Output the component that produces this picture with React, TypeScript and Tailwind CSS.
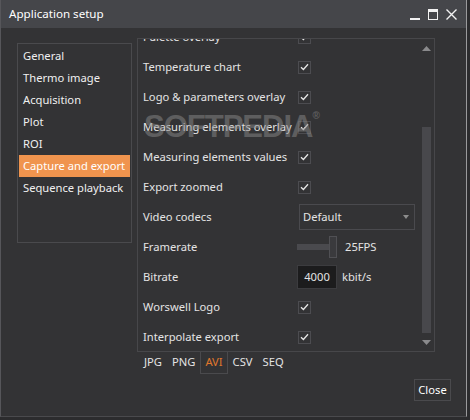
import React from 'react';

const ROWS_TOP = [
  { label: 'Palette overlay', kind: 'check' },
  { label: 'Temperature chart', kind: 'check' },
  { label: 'Logo & parameters overlay', kind: 'check' },
  { label: 'Measuring elements overlay', kind: 'check' },
  { label: 'Measuring elements values', kind: 'check' },
  { label: 'Export zoomed', kind: 'check' },
  { label: 'Video codecs', kind: 'select' },
  { label: 'Framerate', kind: 'slider' },
  { label: 'Bitrate', kind: 'input' },
  { label: 'Worswell Logo', kind: 'check' },
  { label: 'Interpolate export', kind: 'check' },
];

const NAV = ['General', 'Thermo image', 'Acquisition', 'Plot', 'ROI', 'Capture and export', 'Sequence playback'];
const TABS = ['JPG', 'PNG', 'AVI', 'CSV', 'SEQ'];

function Check() {
  return (
    <span className="flex h-[13px] w-[13px] items-center justify-center border border-[#4c4c50]">
      <svg width="9" height="8" viewBox="0 0 9 8" fill="none">
        <path d="M1 4.2 L3.4 6.5 L8 1.2" stroke="#e6e6e6" strokeWidth="1.3" />
      </svg>
    </span>
  );
}

function Control({ kind }: { kind: string }) {
  if (kind === 'check') return <Check />;
  if (kind === 'select') {
    return (
      <div className="ml-[1px] flex h-[26px] w-[116px] items-center justify-between border border-[#4a4a4e] pl-[3px] pr-[5px]">
        <span>Default</span>
        <svg width="6" height="4" viewBox="0 0 6 4">
          <path d="M0 0 H6 L3 4 Z" fill="#8c8c8c" />
        </svg>
      </div>
    );
  }
  if (kind === 'slider') {
    return (
      <div className="ml-[-1px] flex items-center">
        <div className="h-[6px] w-[32px] bg-[#4a4a4e]" />
        <div className="h-[22px] w-[8px] border border-[#505054] bg-[#3a3a3d]" />
        <span className="ml-[8px]">25FPS</span>
      </div>
    );
  }
  return (
    <div className="ml-[-1px] flex items-center">
      <div className="flex h-[24px] w-[40px] items-center justify-center border border-[#3c3c3f] bg-[#1c1c1d]">4000</div>
      <span className="ml-[5px]">kbit/s</span>
    </div>
  );
}

export default function App() {
  return (
    <div className="h-[420px] w-[470px] bg-[#2c2c2e] font-['Noto_Sans',sans-serif] text-[11.2px] text-[#e4e4e4]">
      <div className="flex h-[417px] w-[467px] flex-col border-l border-r border-b border-l-[#56565a] border-r-[#9a9a9c] border-b-[#4a4a4d] bg-[#333335]">
        {/* title bar */}
        <div className="flex h-[28px] shrink-0 items-center justify-between bg-[#45464a] pl-[8px] pr-[9px]">
          <span className="text-[11.6px] text-white">Application setup</span>
          <div className="flex items-center gap-[8px]">
            <svg width="10" height="11" viewBox="0 0 10 11">
              <rect x="0" y="9" width="10" height="2" fill="#f2f2f2" />
            </svg>
            <svg width="10" height="11" viewBox="0 0 10 11">
              <rect x="0.5" y="0.5" width="9" height="10" fill="none" stroke="#f2f2f2" />
              <rect x="0" y="0" width="10" height="3" fill="#f2f2f2" />
            </svg>
            <svg width="11" height="11" viewBox="0 0 11 11">
              <path d="M0.5 0.5 L10.5 10.5 M10.5 0.5 L0.5 10.5" stroke="#f2f2f2" strokeWidth="1.4" />
            </svg>
          </div>
        </div>

        {/* body */}
        <div className="relative flex flex-1 flex-col">
          <div className="flex pt-[10px]">
            <div className="ml-[16px] mt-[5px] flex h-[200px] w-[115px] flex-col border border-[#4a4a4d] p-[1px]">
              {NAV.map((item) => (
                <div
                  key={item}
                  className={
                    item === 'Capture and export'
                      ? 'flex h-[22px] items-center whitespace-nowrap bg-[#f0944e] pl-[4px] text-white'
                      : 'flex h-[22px] items-center whitespace-nowrap pl-[4px] text-[#f0f0f0]'
                  }
                >
                  {item}
                </div>
              ))}
            </div>

            <div className="ml-[5px] flex flex-col">
              <div className="flex h-[314px] w-[298px] border border-[#47474a]">
                <div className="flex-1 overflow-hidden">
                  <div className="-mt-[17px] flex flex-col pl-[5px]">
                    {ROWS_TOP.map((row) => (
                      <div key={row.label} className="flex h-[30px] items-center">
                        <span className="w-[155px] shrink-0 whitespace-nowrap">{row.label}</span>
                        <Control kind={row.kind} />
                      </div>
                    ))}
                  </div>
                </div>
                <div className="mr-[3px] flex w-[9px] flex-col items-center pt-[7px]">
                  <svg width="9" height="5" viewBox="0 0 9 5">
                    <path d="M0 5 L4.5 0 L9 5 Z" fill="#8a8a8c" />
                  </svg>
                  <div className="mt-[76px] h-[206px] w-[9px] bg-[#48484c]" />
                  <svg className="mt-[7px]" width="9" height="5" viewBox="0 0 9 5">
                    <path d="M0 0 L9 0 L4.5 5 Z" fill="#8a8a8c" />
                  </svg>
                </div>
              </div>
              <div className="flex h-[22px] pl-[2px]">
                {TABS.map((tab) => (
                  <div
                    key={tab}
                    className={
                      tab === 'AVI'
                        ? 'flex items-center border border-t-0 border-[#4a4a4d] px-[4px] text-[#e0782c]'
                        : 'flex items-center border border-t-0 border-transparent px-[4px]'
                    }
                  >
                    {tab}
                  </div>
                ))}
              </div>
            </div>
          </div>

          <div className="mt-[5px] flex justify-end pr-[15px]">
            <div className="flex h-[22px] w-[37px] items-center justify-center border border-[#4a4a4d] text-white">Close</div>
          </div>

          {/* watermark */}
          <div className="pointer-events-none absolute left-[143px] top-[83px] font-['Liberation_Sans',sans-serif] text-[31px] font-bold leading-none tracking-[-1px] text-[#8a8a8a] opacity-50">
            SOFTPEDIA<span className="align-top text-[10px]">®</span>
          </div>
        </div>
      </div>
    </div>
  );
}
